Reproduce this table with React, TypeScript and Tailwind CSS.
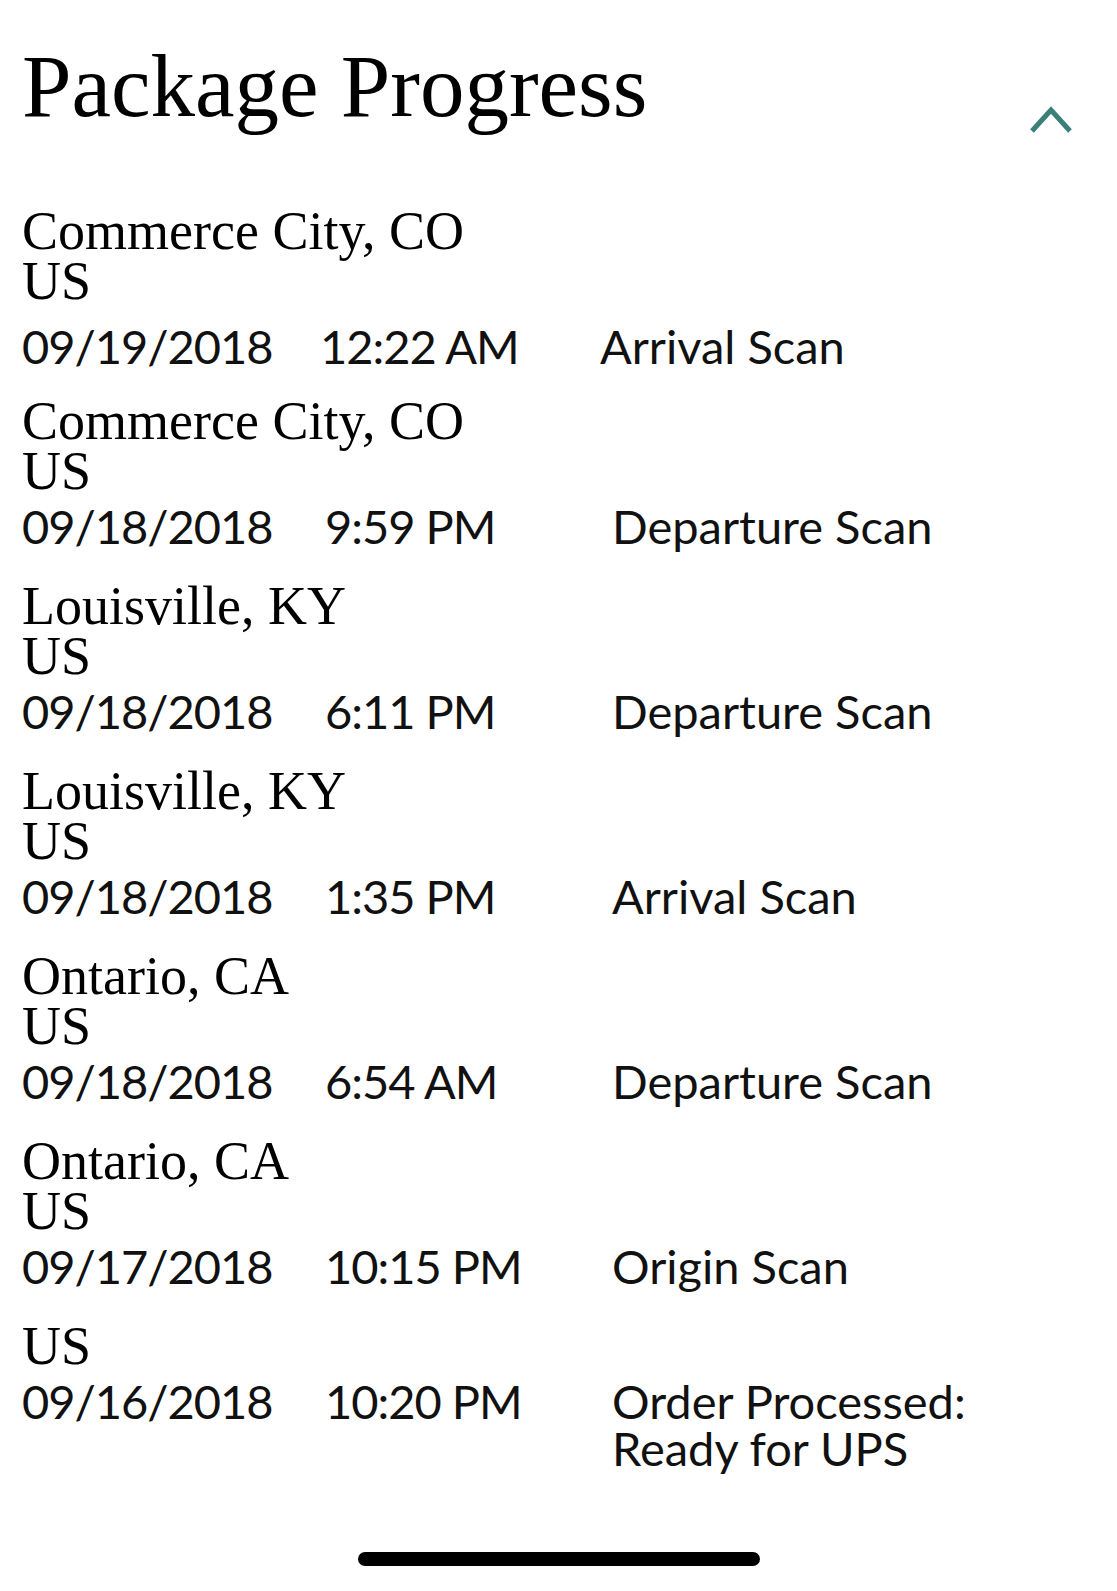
import React from "react";

type Scan = {
  city?: string;
  country: string;
  date: string;
  time: string;
  status: string[];
};

const scans: Scan[] = [
  { city: "Commerce City, CO", country: "US", date: "09/19/2018", time: "12:22 AM", status: ["Arrival Scan"] },
  { city: "Commerce City, CO", country: "US", date: "09/18/2018", time: "9:59 PM", status: ["Departure Scan"] },
  { city: "Louisville, KY", country: "US", date: "09/18/2018", time: "6:11 PM", status: ["Departure Scan"] },
  { city: "Louisville, KY", country: "US", date: "09/18/2018", time: "1:35 PM", status: ["Arrival Scan"] },
  { city: "Ontario, CA", country: "US", date: "09/18/2018", time: "6:54 AM", status: ["Departure Scan"] },
  { city: "Ontario, CA", country: "US", date: "09/17/2018", time: "10:15 PM", status: ["Origin Scan"] },
  { country: "US", date: "09/16/2018", time: "10:20 PM", status: ["Order Processed:", "Ready for UPS"] },
];

const serif = "font-['Liberation_Serif',serif]";
const sans = "font-['Lato',sans-serif]";

const ScanRow = ({ scan, latest }: { scan: Scan; latest: boolean }) => {
  return (
    <div className={latest ? "mb-[-5px]" : ""}>
      <div className={`${serif} text-[54px] leading-[50px] text-black`}>
        {scan.city && <div>{scan.city}</div>}
        <div>{scan.country}</div>
      </div>
      <div
        className={`${sans} grid text-[47px] leading-[47px] text-[#111] ${
          latest ? "mt-[17px] grid-cols-[298px_280px_1fr]" : "mt-[7px] grid-cols-[303px_287px_1fr]"
        }`}
      >
        <div className="tracking-[-1px]">{scan.date}</div>
        <div className="tracking-[-1px]">{scan.time}</div>
        <div>
          {scan.status.map((line) => (
            <div key={line}>{line}</div>
          ))}
        </div>
      </div>
    </div>
  );
};

export default function App() {
  return (
    <div className="flex min-h-[1591px] w-full flex-col bg-white">
      <div className="flex items-start justify-between pl-[22px] pr-[42px] pt-[42px]">
        <h1 className={`${serif} text-[89px] leading-[89px] text-black`}>Package Progress</h1>
        <svg width="48" height="31" viewBox="0 0 48 31" className="mt-[63px]" fill="none">
          <path d="M5 26 L24 5 L43 26" stroke="#3a8078" strokeWidth="5" strokeLinecap="butt" />
        </svg>
      </div>

      <div className="mt-[70px] flex flex-col gap-[31px] pl-[22px]">
        {scans.map((scan, i) => (
          <ScanRow key={i} scan={scan} latest={i === 0} />
        ))}
      </div>

      <div className="mt-auto mb-[25px] flex justify-center">
        <div className="h-[14px] w-[402px] rounded-full bg-black" />
      </div>
    </div>
  );
}
